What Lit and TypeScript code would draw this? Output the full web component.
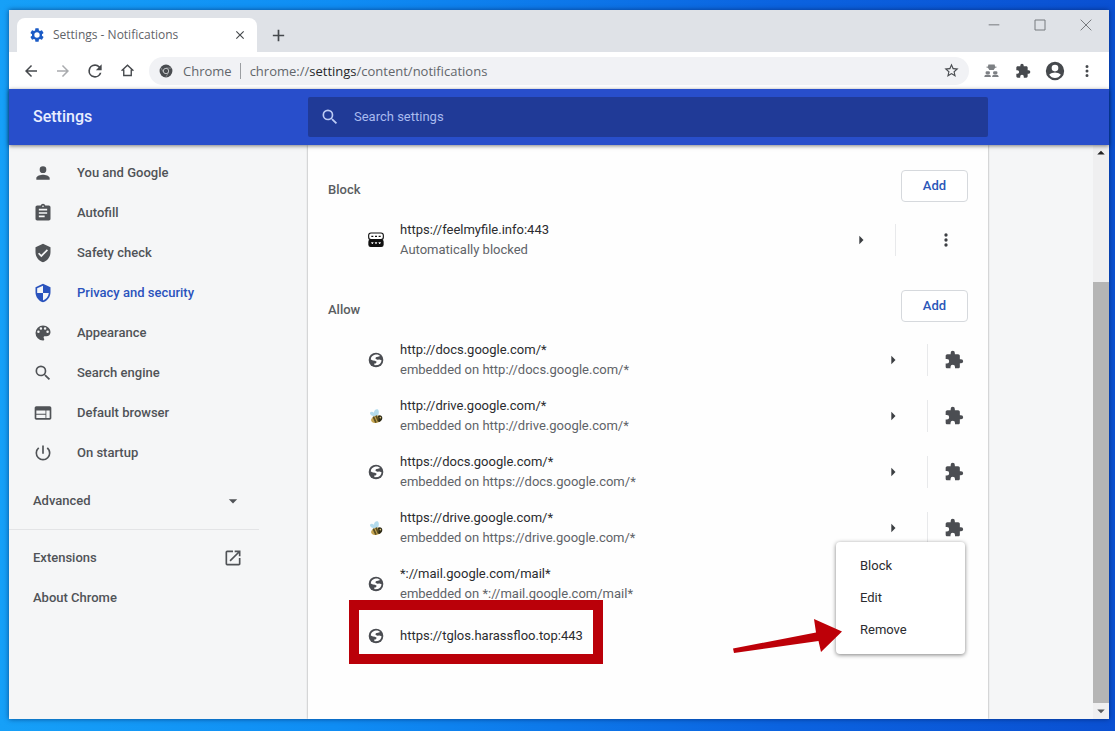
import { LitElement, html, svg, css, nothing } from "lit";
import { customElement, property } from "lit/decorators.js";

const ICONS: Record<string, unknown> = {
  back: svg`<path d="M20 11H7.83l5.59-5.59L12 4l-8 8 8 8 1.41-1.41L7.83 13H20v-2z"/>`,
  forward: svg`<path d="M12 4l-1.41 1.41L16.17 11H4v2h12.17l-5.58 5.59L12 20l8-8z"/>`,
  reload: svg`<path d="M17.65 6.35A7.96 7.96 0 0 0 12 4a8 8 0 1 0 7.73 10h-2.08A6 6 0 1 1 12 6c1.66 0 3.14.69 4.22 1.78L13 11h7V4l-2.35 2.35z"/>`,
  home: svg`<path fill="none" stroke="currentColor" stroke-width="2.2" d="M2.5 12.5 12 3.500l9.500 9M6 10.500V20h12v-9.500"/>`,
  chrome: svg`<circle cx="12" cy="12" r="11"/><circle cx="12" cy="12" r="4.600" fill="none" stroke="#c9cbce" stroke-width="1.600"/><path stroke="#b5b7ba" stroke-width="1" d="M12 7h9M7.700 14.500 3.500 7M16.300 14.500 12 22"/>`,
  star: svg`<path d="M22 9.240l-7.190-.62L12 2 9.190 8.630 2 9.240l5.460 4.730L5.820 21 12 17.270 18.180 21l-1.630-7.030L22 9.240zM12 15.400l-3.760 2.270 1-4.280-3.320-2.880 4.380-.38L12 6.100l1.710 4.040 4.380.38-3.320 2.880 1 4.280L12 15.400z"/>`,
  puzzle: svg`<path d="M20.500 11H19V7c0-1.100-.9-2-2-2h-4V3.500a2.500 2.500 0 0 0-5 0V5H4c-1.100 0-2 .9-2 2v3.800h1.500a2.700 2.700 0 0 1 0 5.400H2V20c0 1.100.9 2 2 2h3.800v-1.500a2.700 2.700 0 0 1 5.400 0V22H17c1.100 0 2-.9 2-2v-4h1.500a2.500 2.500 0 0 0 0-5z"/>`,
  agents: svg`<path d="M7 2.500h10l1 4.500-2.500 4h-7L6 7z"/><path d="M4 5.800h16v1.600H4z"/><rect x="2.500" y="13" width="7" height="5" rx="2"/><rect x="14.500" y="13" width="7" height="5" rx="2"/><path d="M0.500 22.500c0-3 2-4 5.500-4s5 1 5 4zM13 22.500c0-3 2-4 5-4s5.500 1 5.500 4z"/>`,
  avatar: svg`<path fill-rule="evenodd" d="M12 1a11 11 0 1 0 0 22 11 11 0 0 0 0-22zm0 3.500a4 4 0 1 1 0 8 4 4 0 0 1 0-8zM5 16.600c1.500-2 5-2.900 7-2.900s5.500.9 7 2.900a8.400 8.400 0 0 1-14 0z"/>`,
  dots: svg`<path d="M12 8a2 2 0 1 0 0-4 2 2 0 0 0 0 4zm0 2a2 2 0 1 0 0 4 2 2 0 0 0 0-4zm0 6a2 2 0 1 0 0 4 2 2 0 0 0 0-4z"/>`,
  gear: svg`<path fill-rule="evenodd" d="M19.430 12.980c.04-.32.07-.64.07-.98s-.03-.66-.07-.98l2.110-1.650c.19-.15.24-.42.12-.64l-2-3.460c-.12-.22-.39-.3-.61-.22l-2.490 1a7.300 7.300 0 0 0-1.690-.98l-.38-2.650A.49.49 0 0 0 14 2h-4c-.25 0-.46.18-.49.42l-.38 2.650c-.61.25-1.170.59-1.690.98l-2.490-1c-.23-.09-.49 0-.61.22l-2 3.460c-.13.22-.07.49.12.64l2.110 1.650c-.04.32-.07.65-.07.98s.03.66.07.98l-2.110 1.650c-.19.15-.24.42-.12.64l2 3.460c.12.22.39.3.61.22l2.490-1c.52.4 1.080.73 1.690.98l.38 2.650c.03.24.24.42.49.42h4c.25 0 .46-.18.49-.42l.38-2.650c.61-.25 1.170-.59 1.690-.98l2.490 1c.23.09.49 0 .61-.22l2-3.460c.12-.22.07-.49-.12-.64l-2.110-1.650zM12 16a4 4 0 1 1 0-8 4 4 0 0 1 0 8z"/>`,
  close: svg`<path d="M19 6.410 17.590 5 12 10.590 6.410 5 5 6.410 10.590 12 5 17.590 6.410 19 12 13.410 17.590 19 19 17.590 13.410 12z"/>`,
  plus: svg`<path d="M20 13.200h-6.800V20h-2.400v-6.800H4v-2.400h6.800V4h2.400v6.800H20z"/>`,
  winMin: svg`<path d="M4 11h16v1.500H4z"/>`,
  winMax: svg`<path fill="none" stroke="currentColor" stroke-width="1.500" d="M4.500 4.500h15v15h-15z"/>`,
  winClose: svg`<path fill="none" stroke="currentColor" stroke-width="1.500" d="M4 4l16 16M20 4 4 20"/>`,
  search: svg`<path d="M15.500 14h-.79l-.28-.27A6.470 6.470 0 0 0 16 9.500 6.500 6.500 0 1 0 9.500 16c1.610 0 3.090-.59 4.230-1.570l.27.28v.79l5 4.990L20.490 19l-4.990-5zm-6 0a4.500 4.500 0 1 1 0-9 4.500 4.500 0 0 1 0 9z"/>`,
  person: svg`<path d="M12 12a4 4 0 1 0 0-8 4 4 0 0 0 0 8zm0 2c-2.670 0-8 1.340-8 4v2h16v-2c0-2.660-5.330-4-8-4z"/>`,
  clipboard: svg`<path d="M19 3h-4.180a3 3 0 0 0-5.640 0H5c-1.100 0-2 .9-2 2v14c0 1.100.9 2 2 2h14c1.100 0 2-.9 2-2V5c0-1.100-.9-2-2-2zm-7 0a1 1 0 1 1 0 2 1 1 0 0 1 0-2zm2 14H7v-2h7v2zm3-4H7v-2h10v2zm0-4H7V7h10v2z"/>`,
  shieldCheck: svg`<path d="M12 1 3 5v6c0 5.550 3.840 10.740 9 12 5.160-1.260 9-6.450 9-12V5l-9-4zm-2 16-4-4 1.410-1.410L10 14.170l6.590-6.590L18 9l-8 8z"/>`,
  shield: svg`<path d="M12 1 3 5v6c0 5.550 3.840 10.740 9 12 5.160-1.260 9-6.450 9-12V5l-9-4zm0 10.990h7c-.53 4.120-3.280 7.790-7 8.940V12H5V6.300l7-3.110v8.800z"/>`,
  palette: svg`<path d="M12 3a9 9 0 0 0 0 18c.83 0 1.500-.67 1.500-1.500 0-.39-.15-.74-.39-1.010-.23-.26-.38-.61-.38-.99 0-.83.67-1.500 1.500-1.500H16c2.760 0 5-2.240 5-5 0-4.420-4.030-8-9-8zm-5.500 9a1.500 1.500 0 1 1 0-3 1.500 1.500 0 0 1 0 3zm3-4a1.500 1.500 0 1 1 0-3 1.500 1.500 0 0 1 0 3zm5 0a1.500 1.500 0 1 1 0-3 1.500 1.500 0 0 1 0 3zm3 4a1.500 1.500 0 1 1 0-3 1.500 1.500 0 0 1 0 3z"/>`,
  browser: svg`<path d="M20 4H4c-1.100 0-2 .9-2 2v12c0 1.100.9 2 2 2h16c1.100 0 2-.9 2-2V6c0-1.100-.9-2-2-2zm-5 14H4v-4h11v4zm0-5H4V9h11v4zm5 5h-4V9h4v9z"/>`,
  power: svg`<path d="M13 3h-2v10h2V3zm4.830 2.170-1.420 1.420A6.920 6.920 0 0 1 19 12a7 7 0 1 1-11.420-5.420L6.170 5.170A8.930 8.930 0 0 0 3 12a9 9 0 1 0 18 0c0-2.740-1.230-5.180-3.170-6.830z"/>`,
  caretDown: svg`<path d="M7 10l5 5 5-5z"/>`,
  caretRight: svg`<path d="M10 17l5-5-5-5z"/>`,
  open: svg`<path d="M19 19H5V5h7V3H5a2 2 0 0 0-2 2v14a2 2 0 0 0 2 2h14c1.100 0 2-.9 2-2v-7h-2v7zM14 3v2h3.590l-9.830 9.830 1.410 1.410L19 6.410V10h2V3h-7z"/>`,
  globe: svg`<circle cx="12" cy="12" r="11"/><path fill="#fff" d="M10 4.200C13 3 16.500 3.800 18.300 6L15 7.200l-3.200.8-.6 2.300 2.800 1.500 3.300-.6 3 1.200c-.2 3.200-2.200 6-5.300 7.200l-5 .4-1-2.200 3-.8 1-2.200-2.600-1.800-3-.2-3.200-1.700C4.200 7.800 6.500 5.200 10 4.200z"/>`,
  robot: svg`<rect x="1" y="1.500" width="22" height="10" rx="3.500" fill="#fff" stroke="#111" stroke-width="1.700"/><rect x="0.500" y="11" width="23" height="11.500" rx="3.500" fill="#111"/><path fill="#111" d="M5 5.500h3v2H5zM10.500 5.500h3v2h-3zM16 5.500h3v2h-3z"/><path fill="#fff" d="M4.500 15.500h4L7 18H6zM10 15.500h4L12.500 18h-1zM15.500 15.500h4L18 18h-1z"/>`,
  bee: svg`<path fill="#b4dcee" d="M3 7c1-2 4-2 6 0 0-4 3-6 5.500-5 2.500 1.500 2 6.500.5 9.500l-4 1.500C7 12.500 2.500 10 3 7z"/><ellipse cx="12.500" cy="17" rx="8" ry="5.300" fill="#c6a552" transform="rotate(-16 12.500 17)"/><path d="M8 13l4 9M12 11.500l4 9" stroke="#5c5023" stroke-width="2.600"/><path fill="#2e2b17" d="M15 11.500c3-2 6.500 0 6.500 3.500s-3 6-5.500 6z"/><circle cx="18.500" cy="14.500" r="1.200" fill="#d9c27c"/>`,
};

@customElement("ui-icon")
class UiIcon extends LitElement {
  @property() name = "";
  @property({ type: Number }) size = 20;
  static styles = css`
    :host { display: inline-flex; flex: none; }
    svg { display: block; fill: currentColor; }
  `;
  render() {
    return html`<svg width=${this.size} height=${this.size} viewBox="0 0 24 24" aria-hidden="true">${ICONS[this.name]}</svg>`;
  }
}

@customElement("browser-chrome")
class BrowserChrome extends LitElement {
  static styles = css`
    :host { display: block; font-family: "Open Sans", "Noto Sans", sans-serif; color: #5f6368; }
    button { border: 0; background: none; padding: 0; color: inherit; display: flex; align-items: center; justify-content: center; flex: none; }
    .strip { display: flex; height: 42px; background: #dfe2e7; padding-left: 8px; box-sizing: border-box; }
    .tab { width: 240px; box-sizing: border-box; margin-top: 8px; padding: 0 9px 0 12px; background: #fff; border-radius: 8px 8px 0 0; display: flex; align-items: center; gap: 8px; font-size: 12px; }
    .tab span { flex: 1; white-space: nowrap; }
    .gear { color: #1b5bc6; }
    .close { width: 16px; height: 16px; color: #45494d; }
    .new { width: 28px; height: 28px; margin: 11px 0 0 7px; color: #45494d; }
    .controls { margin-left: auto; display: flex; }
    .controls button { width: 46px; height: 29px; color: #777a7e; }
    .bar { display: flex; align-items: center; height: 37px; background: #fff; padding: 0 6px; color: #46494d; }
    .bar > button { width: 32px; height: 32px; }
    .bar > .off { color: #a9abae; }
    .bar > .dim { color: #7d8084; }
    .omni { flex: 1; min-width: 0; height: 28px; margin: 0 6px; padding: 0 9px 0 10px; box-sizing: border-box; background: #f1f2f5; border-radius: 14px; display: flex; align-items: center; font-size: 13px; line-height: 18px; color: #62666b; white-space: nowrap; }
    .omni ui-icon { color: #4a4d51; }
    .scheme { margin: 0 8px 0 10px; }
    .rule { width: 1px; height: 16px; background: #9b9ea2; margin-right: 9px; }
    .url { flex: 1; min-width: 0; overflow: hidden; }
    .url b { font-weight: 400; color: #26282b; }
  `;
  private nav(name: string, label: string, size = 18, cls = "") {
    return html`<button class=${cls} aria-label=${label}><ui-icon name=${name} size=${size}></ui-icon></button>`;
  }
  render() {
    return html`
      <div class="strip">
        <div class="tab">
          <ui-icon class="gear" name="gear" size="16"></ui-icon>
          <span>Settings - Notifications</span>
          ${this.nav("close", "Close tab", 14, "close")}
        </div>
        ${this.nav("plus", "New tab", 17, "new")}
        <div class="controls">
          ${this.nav("winMin", "Minimize", 16)}${this.nav("winMax", "Maximize", 16)}${this.nav("winClose", "Close", 16)}
        </div>
      </div>
      <div class="bar">
        ${this.nav("back", "Back")}${this.nav("forward", "Forward", 18, "off")}${this.nav("reload", "Reload", 20)}${this.nav("home", "Home", 15)}
        <div class="omni">
          <ui-icon name="chrome" size="14"></ui-icon>
          <span class="scheme">Chrome</span><span class="rule"></span>
          <span class="url">chrome://<b>settings</b>/content/notifications</span>
          ${this.nav("star", "Bookmark", 17)}
        </div>
        ${this.nav("agents", "Extension", 15, "dim")}${this.nav("puzzle", "Extensions", 16)}${this.nav("avatar", "Profile", 20)}${this.nav("dots", "Menu", 18)}
      </div>`;
  }
}

@customElement("settings-nav")
class SettingsNav extends LitElement {
  static styles = css`
    :host { display: block; padding-top: 8px; color: #505357; font-weight: 500; }
    nav { width: 250px; }
    a, button { display: flex; align-items: center; gap: 24px; width: 100%; height: 40px; box-sizing: border-box; padding: 0 16px 0 24px; color: inherit; text-decoration: none; font: inherit; border: 0; background: none; }
    button { margin-top: 8px; }
    .on { color: #2a53bd; }
    .end { justify-content: space-between; }
    hr { border: 0; height: 1px; margin: 8px 0; background: #e3e4e6; }
  `;
  private items = [
    ["person", "You and Google"],
    ["clipboard", "Autofill"],
    ["shieldCheck", "Safety check"],
    ["shield", "Privacy and security"],
    ["palette", "Appearance"],
    ["search", "Search engine"],
    ["browser", "Default browser"],
    ["power", "On startup"],
  ];
  render() {
    return html`<nav>
      ${this.items.map(([icon, label]) => html`<a href="#" class=${icon === "shield" ? "on" : ""}><ui-icon name=${icon}></ui-icon>${label}</a>`)}
      <button class="end">Advanced<ui-icon name="caretDown"></ui-icon></button>
      <hr />
      <a href="#" class="end">Extensions<ui-icon name="open"></ui-icon></a>
      <a href="#">About Chrome</a>
    </nav>`;
  }
}

@customElement("site-row")
class SiteRow extends LitElement {
  @property() icon = "globe";
  @property() site = "";
  @property() note = "";
  @property({ type: Boolean }) managed = false;
  @property({ type: Boolean, reflect: true }) marked = false;
  static styles = css`
    :host { display: flex; align-items: center; min-height: 56px; padding-left: 40px; line-height: 20px; color: #5f6368; }
    :host([marked]) { min-height: 48px; position: relative; }
    .fav { color: #4b4d52; margin-right: 16px; }
    .text { flex: 1; min-width: 0; }
    .site { color: #2b2c2f; }
    button { width: 36px; height: 36px; padding: 0; border: 0; background: none; color: #3c3f43; display: flex; align-items: center; justify-content: center; }
    .sep { width: 1px; height: 32px; margin: 0 32px 0 16px; background: #e8e9eb; }
    .managed { margin-right: 16px; }
    .ext { color: #4b4d52; margin-right: 4px; }
    .more { margin-right: 4px; }
    .frame { position: absolute; left: 21px; top: -12px; width: 254px; height: 64px; box-sizing: border-box; border: 10px solid #ba0009; pointer-events: none; }
  `;
  render() {
    return html`
      <ui-icon class="fav" name=${this.icon} size="16"></ui-icon>
      <div class="text">
        <div class="site">${this.site}</div>
        ${this.note ? html`<div>${this.note}</div>` : nothing}
      </div>
      <button aria-label="Site details"><ui-icon name="caretRight"></ui-icon></button>
      <span class="sep ${this.managed ? "managed" : ""}"></span>
      ${this.managed
        ? html`<ui-icon class="ext" name="puzzle"></ui-icon>`
        : html`<button class="more" aria-label="More actions"><ui-icon name="dots"></ui-icon></button>`}
      ${this.marked ? html`<div class="frame"></div>` : nothing}`;
  }
}

@customElement("app-root")
class AppRoot extends LitElement {
  static styles = css`
    :host { display: flex; height: 100vh; box-sizing: border-box; padding: 10px 6px 12px 9px; overflow: hidden; font: 13px/20px Roboto, "Liberation Sans", sans-serif; background: linear-gradient(90deg, #16a0f8 0%, #0f8df4 30%, #0b63e0 70%, #0a50d2 100%); }
    .window { flex: 1; min-width: 0; display: flex; flex-direction: column; background: #f5f6f7; box-shadow: 0 0 5px rgba(0, 20, 70, 0.6); }
    header, .page { display: grid; grid-template-columns: minmax(250px, 299px) minmax(0, 680px) minmax(0, 1fr); }
    header { flex: none; height: 56px; align-items: center; background: #284ecb; box-shadow: 0 1px 4px rgba(0, 0, 0, 0.5); position: relative; z-index: 1; }
    h1 { margin: 0; padding-left: 24px; font-size: 16px; font-weight: 500; color: #e8eeff; }
    .search { display: flex; align-items: center; gap: 14px; height: 40px; padding-left: 12px; background: #203a97; border-radius: 2px; color: #bccbf5; }
    input { flex: 1; min-width: 0; border: 0; padding: 0; background: none; outline: 0; font: inherit; color: inherit; }
    input::placeholder { color: #a9bbef; opacity: 1; }
    .body { flex: 1; min-height: 0; display: flex; }
    .page { flex: 1; min-width: 0; overflow: hidden; }
    main { background: #fefefe; padding: 15px 20px 0; box-shadow: 0 0 2px rgba(0, 0, 0, 0.4); }
    .head { display: flex; justify-content: space-between; height: 52px; align-items: center; }
    section + section { margin-top: 12px; }
    h2 { margin: 0; padding-top: 8px; font-size: 13px; font-weight: 500; color: #5a5d61; }
    .add { width: 67px; height: 32px; border: 1px solid #d6d9dd; border-radius: 4px; background: #fff; color: #2b57b8; font: inherit; font-weight: 500; }
    .list { position: relative; }
    .menu { position: absolute; right: 3px; bottom: 6px; width: 129px; box-sizing: border-box; padding: 8px 0; background: #fff; border-radius: 4px; box-shadow: 0 1px 4px rgba(0, 0, 0, 0.5); }
    .menu button { display: block; width: 100%; height: 32px; padding: 0 24px; border: 0; background: none; text-align: left; font: inherit; color: #2b2c2f; }
    .arrow { position: absolute; right: 126px; bottom: 6px; fill: #bd0008; }
    .scroll { width: 16px; display: flex; flex-direction: column; background: #efeff0; color: #55585c; }
    .scroll span { flex: none; height: 16px; display: flex; align-items: center; justify-content: center; }
    .scroll .up { transform: rotate(180deg); color: #222; }
    .gap { flex: 121; }
    .thumb { flex: 420; background: #b5b5b5; }
  `;
  private allowed = [
    ["globe", "http://docs.google.com/*"],
    ["bee", "http://drive.google.com/*"],
    ["globe", "https://docs.google.com/*"],
    ["bee", "https://drive.google.com/*"],
    ["globe", "*://mail.google.com/mail*"],
  ];
  render() {
    return html`<div class="window">
      <browser-chrome></browser-chrome>
      <header>
        <h1>Settings</h1>
        <label class="search"><ui-icon name="search"></ui-icon><input type="search" aria-label="Search settings" placeholder="Search settings" /></label>
      </header>
      <div class="body">
        <div class="page">
          <settings-nav></settings-nav>
          <main>
            <section>
              <div class="head"><h2>Block</h2><button class="add">Add</button></div>
              <site-row icon="robot" site="https://feelmyfile.info:443" note="Automatically blocked"></site-row>
            </section>
            <section>
              <div class="head"><h2>Allow</h2><button class="add">Add</button></div>
              <div class="list">
                ${this.allowed.map(([icon, site]) => html`<site-row managed icon=${icon} site=${site} note=${"embedded on " + site}></site-row>`)}
                <site-row marked site="https://tglos.harassfloo.top:443"></site-row>
                <div class="menu" role="menu">
                  <button role="menuitem">Block</button><button role="menuitem">Edit</button><button role="menuitem">Remove</button>
                </div>
                <svg class="arrow" width="110" height="36" viewBox="0 0 110 36" aria-hidden="true"><path d="M1 30.500 84 14.500 82 1l28 12.500L89 34l-2.500-11L2 35z"/></svg>
              </div>
            </section>
          </main>
        </div>
        <div class="scroll" aria-hidden="true">
          <span class="up"><ui-icon name="caretDown" size="18"></ui-icon></span>
          <div class="gap"></div><div class="thumb"></div>
          <span><ui-icon name="caretDown" size="18"></ui-icon></span>
        </div>
      </div>
    </div>`;
  }
}
